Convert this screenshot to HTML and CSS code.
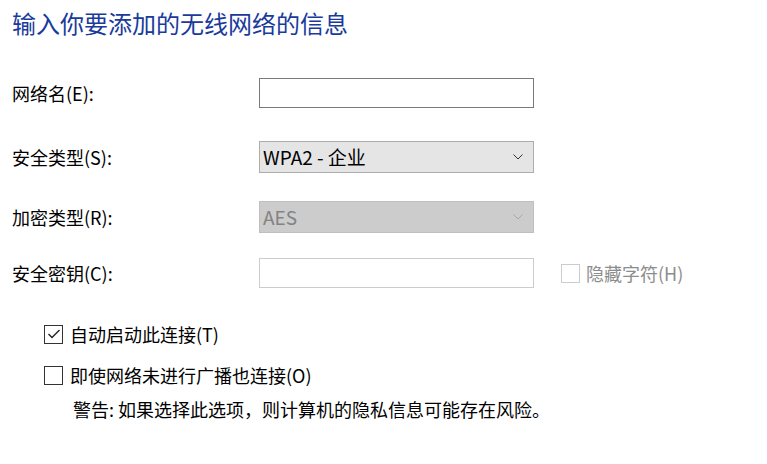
FILE: index.html
```html
<!DOCTYPE html>
<html lang="zh-CN">
<head>
<meta charset="utf-8">
<title>手动连接到无线网络</title>
<link rel="stylesheet" href="styles.css">
</head>
<body>
<div class="page">
  <h1 class="title">输入你要添加的无线网络的信息</h1>
  <div class="form">
    <div class="row row-1">
      <label class="label">网络名(E):</label>
      <div class="input"></div>
    </div>
    <div class="row row-2">
      <label class="label">安全类型(S):</label>
      <div class="select">
        <span class="select-text">WPA2 - 企业</span>
        <svg class="chev" width="10" height="6" viewBox="0 0 10 6"><polyline points="0.5,0.5 5,5 9.5,0.5" fill="none" stroke="#333" stroke-width="1"/></svg>
      </div>
    </div>
    <div class="row row-3">
      <label class="label">加密类型(R):</label>
      <div class="select disabled">
        <span class="select-text">AES</span>
        <svg class="chev" width="10" height="6" viewBox="0 0 10 6"><polyline points="0.5,0.5 5,5 9.5,0.5" fill="none" stroke="#a8a8a8" stroke-width="1"/></svg>
      </div>
    </div>
    <div class="row row-4">
      <label class="label">安全密钥(C):</label>
      <div class="input disabled"></div>
      <div class="check-item side disabled">
        <span class="box"></span>
        <span class="check-text">隐藏字符(H)</span>
      </div>
    </div>
  </div>
  <div class="options">
    <div class="check-item">
      <span class="box">
        <svg width="14" height="12" viewBox="0 0 14 12"><polyline points="1.5,6 5,9.5 12.5,2" fill="none" stroke="#222" stroke-width="1.4"/></svg>
      </span>
      <span class="check-text">自动启动此连接(T)</span>
    </div>
    <div class="check-item second">
      <span class="box"></span>
      <span class="check-text">即使网络未进行广播也连接(O)</span>
    </div>
    <p class="warning">警告: 如果选择此选项，则计算机的隐私信息可能存在风险。</p>
  </div>
</div>
</body>
</html>
```

FILE: styles.css
```css
html, body {
  margin: 0;
  padding: 0;
  background: #ffffff;
}
body {
  font-family: "Noto Sans CJK SC", "Noto Sans", sans-serif;
  color: #000;
  width: 767px;
  height: 464px;
  overflow: hidden;
}
.page {
  padding: 7px 0 0 12px;
}
.title {
  margin: 0;
  font-size: 24px;
  line-height: 32px;
  font-weight: 400;
  color: #1a3a9c;
}
.form {
  display: flex;
  flex-direction: column;
  margin-top: 39px;
}
.row {
  display: grid;
  grid-template-columns: 247px 275px auto;
  align-items: center;
}
.row-1 { height: 30px; }
.row-2 { height: 32px; margin-top: 33px; }
.row-3 { height: 32px; margin-top: 28px; }
.row-4 { height: 30px; margin-top: 25px; }
.label {
  font-size: 18px;
  line-height: 24px;
}
.input {
  height: 30px;
  box-sizing: border-box;
  border: 1px solid #7a7a7a;
  background: #fff;
}
.input.disabled {
  border-color: #cccccc;
}
.select {
  height: 32px;
  box-sizing: border-box;
  border: 1px solid #adadad;
  background: #e5e5e5;
  display: flex;
  align-items: center;
  justify-content: space-between;
  padding: 0 10px 0 3px;
}
.select.disabled {
  background: #cccccc;
  border-color: #bfbfbf;
}
.select-text {
  font-size: 19px;
  line-height: 24px;
}
.select.disabled .select-text {
  color: #838383;
}
.chev {
  display: block;
}
.check-item {
  display: flex;
  align-items: center;
  gap: 7px;
}
.box {
  width: 19px;
  height: 19px;
  box-sizing: border-box;
  border: 1px solid #333;
  background: #fff;
  display: flex;
  align-items: center;
  justify-content: center;
}
.check-text {
  font-size: 18px;
  line-height: 24px;
}
.check-item.side {
  margin-left: 27px;
  gap: 6px;
}
.check-item.disabled .box {
  border-color: #cccccc;
}
.check-item.disabled .check-text {
  color: #8d8d8d;
}
.options {
  margin-top: 34px;
  padding-left: 32px;
}
.check-item.second {
  margin-top: 17px;
}
.warning {
  margin: 10px 0 0 29px;
  font-size: 18px;
  line-height: 24px;
}
```
